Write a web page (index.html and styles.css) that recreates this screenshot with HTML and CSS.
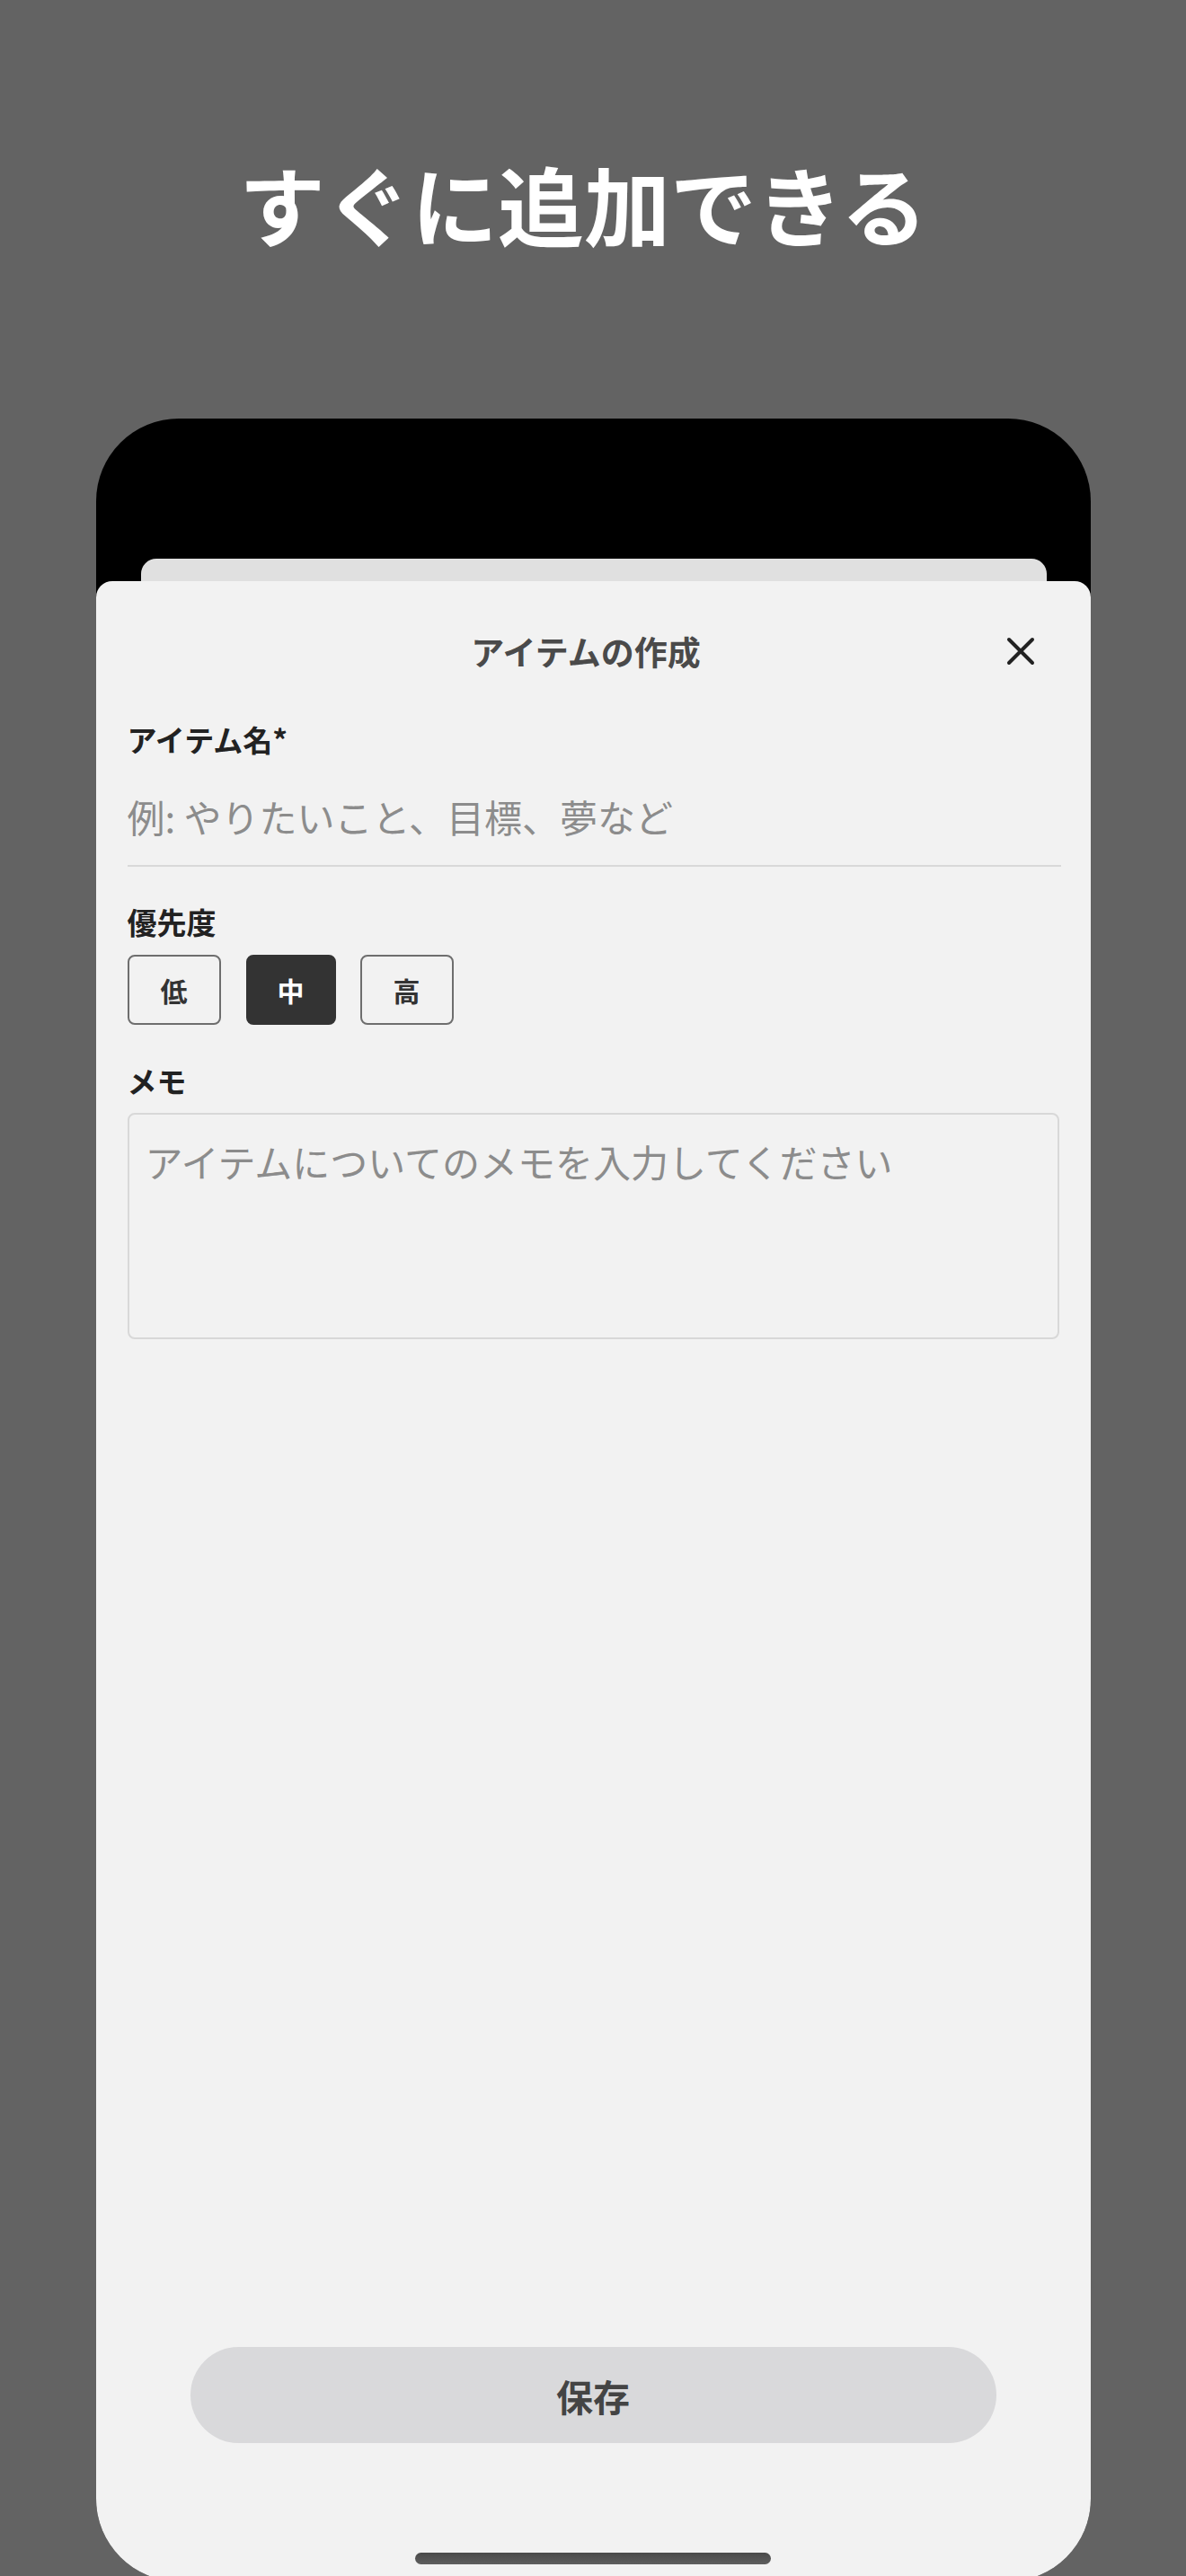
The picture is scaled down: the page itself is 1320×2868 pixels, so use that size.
FILE: index.html
```html
<!DOCTYPE html>
<html lang="ja">
<head>
<meta charset="utf-8">
<title>すぐに追加できる</title>
<link rel="stylesheet" href="styles.css">
</head>
<body>
  <h1 class="headline">すぐに追加できる</h1>
  <div class="phone">
    <div class="sheet-back"></div>
    <div class="sheet">
      <div class="sheet-header">
        <span class="spacer"></span>
        <h2 class="sheet-title">アイテムの作成</h2>
        <button class="close" aria-label="閉じる">
          <svg width="32" height="32" viewBox="0 0 32 32">
            <path d="M3 3 L29 29 M29 3 L3 29" stroke="#222" stroke-width="4" stroke-linecap="round" fill="none"/>
          </svg>
        </button>
      </div>
      <div class="form">
        <label class="label">アイテム名*</label>
        <input class="name-input" type="text" placeholder="例: やりたいこと、目標、夢など">
        <label class="label label-priority">優先度</label>
        <div class="priority">
          <button class="prio">低</button>
          <button class="prio prio-active">中</button>
          <button class="prio">高</button>
        </div>
        <label class="label label-memo">メモ</label>
        <textarea class="memo" placeholder="アイテムについてのメモを入力してください"></textarea>
      </div>
      <div class="footer">
        <button class="save">保存</button>
        <div class="home-indicator"></div>
      </div>
    </div>
  </div>
</body>
</html>
```

FILE: styles.css
```css
* { box-sizing: border-box; }

html, body {
  margin: 0;
  padding: 0;
}

body {
  width: 1320px;
  height: 2868px;
  overflow: hidden;
  background: #636363;
  font-family: "Noto Sans CJK JP", "Noto Sans", sans-serif;
}

.headline {
  margin: 178px 0 0;
  padding-right: 22px;
  font-size: 96px;
  line-height: 96px;
  font-weight: 700;
  color: #ffffff;
  text-align: center;
  letter-spacing: 0;
}

.phone {
  width: 1107px;
  height: 2408px;
  margin: 192px auto 0;
  background: #000000;
  border-radius: 92px;
  padding-top: 156px;
  display: flex;
  flex-direction: column;
}

.sheet-back {
  height: 25px;
  margin: 0 49px 0 50px;
  background: #e0e0e0;
  border-radius: 17px 17px 0 0;
}

.sheet {
  flex: 1;
  background: #f2f2f2;
  border-radius: 18px 18px 92px 92px;
  display: flex;
  flex-direction: column;
}

.sheet-header {
  height: 156px;
  display: grid;
  grid-template-columns: 1fr auto 1fr;
  align-items: center;
  padding: 0 62px 0 46px;
}

.sheet-title {
  margin: 0;
  font-size: 37px;
  line-height: 44px;
  font-weight: 700;
  color: #4a4a4a;
}

.close {
  justify-self: end;
  width: 32px;
  height: 32px;
  padding: 0;
  border: 0;
  background: transparent;
  display: flex;
}

.form {
  display: flex;
  flex-direction: column;
  padding: 0 33px 0 35px;
}

.label {
  font-size: 33px;
  line-height: 40px;
  font-weight: 700;
  color: #222222;
}

.name-input {
  margin-top: 11px;
  height: 111px;
  padding: 0;
  border: 0;
  border-bottom: 2px solid #d9d9d9;
  background: transparent;
  font: inherit;
  font-size: 42px;
  color: #222;
  outline: none;
}

.name-input::placeholder {
  color: #8c8c8c;
}

.label-priority {
  margin-top: 41px;
}

.priority {
  margin-top: 17px;
  display: flex;
  gap: 27px;
}

.prio {
  width: 104px;
  height: 78px;
  padding: 0;
  border: 2px solid #6e6e6e;
  border-radius: 8px;
  background: transparent;
  font-family: inherit;
  font-size: 30px;
  font-weight: 700;
  color: #333333;
}

.prio-active {
  width: 100px;
  margin-left: 1px;
  background: #333333;
  border-color: #333333;
  color: #ffffff;
}

.label-memo {
  margin-top: 42px;
}

.memo {
  margin-top: 16px;
  margin-right: 2px;
  height: 252px;
  padding: 26px 18px;
  border: 2px solid #d8d8d8;
  border-radius: 8px;
  background: transparent;
  font: inherit;
  font-size: 42px;
  line-height: 52px;
  color: #222;
  resize: none;
  outline: none;
}

.memo::placeholder {
  color: #8c8c8c;
}

.footer {
  margin-top: auto;
  display: flex;
  flex-direction: column;
  align-items: center;
  padding-bottom: 19px;
}

.save {
  width: 897px;
  height: 107px;
  border: 0;
  border-radius: 54px;
  background: #d9d9db;
  font-family: inherit;
  font-size: 41px;
  font-weight: 700;
  color: #444444;
  padding: 0;
}

.home-indicator {
  margin-top: 122px;
  width: 396px;
  height: 13px;
  border-radius: 7px;
  background: linear-gradient(#4a4a4a, #5e5e5e);
}
```
